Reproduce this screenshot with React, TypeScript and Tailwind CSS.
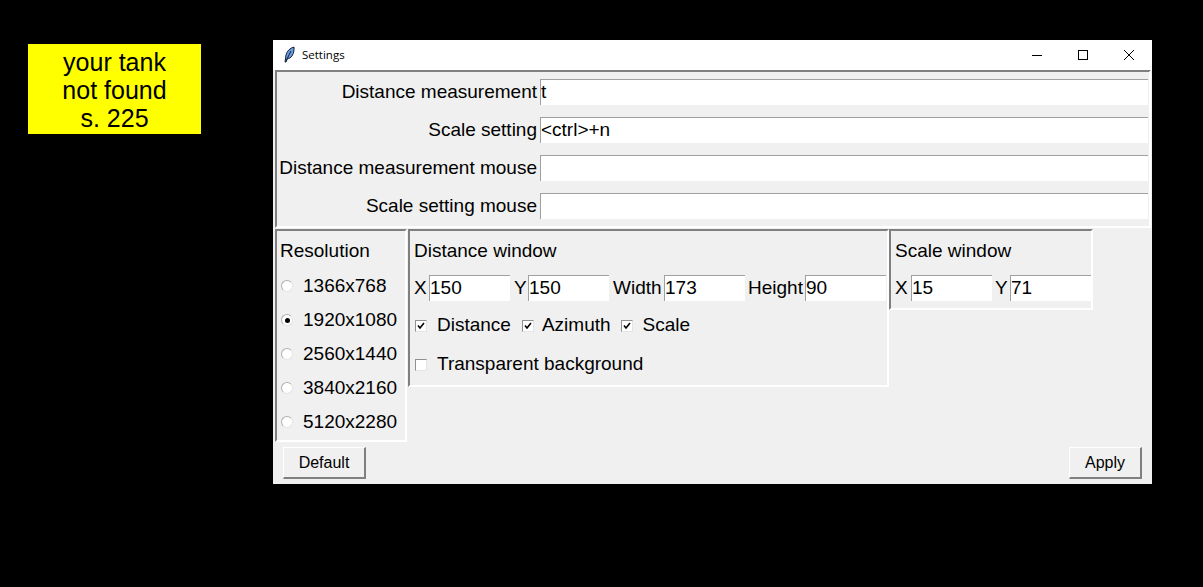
import type { ReactNode } from "react";

const frame = "border-2 border-t-[#808080] border-l-[#808080] border-b-white border-r-white";
const entry = "h-[26px] bg-white border-t border-l border-t-[#a0a0a0] border-l-[#a0a0a0] leading-[24px] overflow-hidden";

function Feather() {
  return (
    <svg width="16" height="18" viewBox="0 0 16 18">
      <path d="M3 16 L4 9 C5 5 8 2 12 1 C12.5 5 11 10 8 12 L5.5 12.5 L4 16 Z" fill="#6f9fe0" stroke="#10203c" strokeWidth="1" />
      <path d="M4 15 L9 5" stroke="#10203c" strokeWidth="1" fill="none" />
    </svg>
  );
}

function Row({ label, value }: { label: string; value?: string }) {
  return (
    <div className="flex items-center">
      <div className="w-[260px] text-right leading-[26px] whitespace-nowrap">{label}</div>
      <div className={`${entry} ml-[3px] w-[608px]`}>{value}</div>
    </div>
  );
}

function Field({ label, value, gap, width = "w-[81px]" }: { label: string; value: string; gap: string; width?: string }) {
  return (
    <div className="flex items-center">
      <span className={gap}>{label}</span>
      <div className={`${entry} ${width}`}>{value}</div>
    </div>
  );
}

function Radio({ label, checked }: { label: string; checked?: boolean }) {
  return (
    <div className="flex items-center h-[34px]">
      <div className="ml-px w-3 h-3 rounded-full bg-white border border-[#b0b0b0] border-b-[#e4e4e4] border-r-[#e4e4e4] flex items-center justify-center">
        {checked && <div className="w-[5px] h-[5px] rounded-full bg-black" />}
      </div>
      <span className="ml-[10px] whitespace-nowrap">{label}</span>
    </div>
  );
}

function Check({ label, checked, labelGap }: { label: string; checked?: boolean; labelGap: string }) {
  return (
    <div className="flex items-center">
      <div className="w-3 h-3 bg-white border border-t-[#909090] border-l-[#909090] border-b-[#e4e4e4] border-r-[#e4e4e4] flex items-center justify-center">
        {checked && (
          <svg width="8" height="8" viewBox="0 0 8 8">
            <path d="M1 3.5 L3 6 L7 1" stroke="#000" strokeWidth="1.6" fill="none" />
          </svg>
        )}
      </div>
      <span className={`${labelGap} whitespace-nowrap`}>{label}</span>
    </div>
  );
}

function TkButton({ children, width }: { children: ReactNode; width: string }) {
  return (
    <div className={`${width} h-8 bg-[#f0f0f0] border border-t-white border-l-white border-b-2 border-r-2 border-b-[#808080] border-r-[#808080] flex items-center justify-center text-[16px]`}>
      {children}
    </div>
  );
}

export default function App() {
  return (
    <div className="w-[1203px] h-[587px] bg-black flex items-start overflow-hidden text-black font-['Liberation_Sans',Arial,sans-serif]">
      <div className="ml-[28px] mt-[44px] w-[173px] h-[90px] bg-[#ffff00] text-center text-[25px] leading-[28px] pt-[4px]">
        <div>your tank</div>
        <div>not found</div>
        <div>s. 225</div>
      </div>

      <div className="ml-[72px] mt-[40px] w-[879px] h-[444px] bg-[#f0f0f0] text-[19px] flex flex-col">
        <div className="h-[30px] bg-white flex items-center pl-[9px] shrink-0">
          <Feather />
          <span className="ml-[4px] text-[11.5px] font-['Open_Sans',sans-serif]">Settings</span>
          <div className="ml-auto flex items-center">
            <svg width="46" height="16" viewBox="0 0 46 16">
              <path d="M18 8.5 H28" stroke="#000" strokeWidth="1" />
            </svg>
            <svg width="46" height="16" viewBox="0 0 46 16">
              <rect x="18.5" y="3.5" width="9" height="9" stroke="#000" fill="none" />
            </svg>
            <svg width="46" height="16" viewBox="0 0 46 16">
              <path d="M18 3 L28 13 M28 3 L18 13" stroke="#000" strokeWidth="1" />
            </svg>
          </div>
        </div>

        <div className={`${frame} ml-[2px] mr-px h-[158px] pt-[7px] flex flex-col gap-3 shrink-0`}>
          <Row label="Distance measurement" value="t" />
          <Row label="Scale setting" value="<ctrl>+n" />
          <Row label="Distance measurement mouse" />
          <Row label="Scale setting mouse" />
        </div>

        <div className="flex items-start mt-px ml-[2px]">
          <div className={`${frame} w-[132px] h-[213px] pl-[3px] pt-[7px]`}>
            <div className="leading-[26px] mb-[5px]">Resolution</div>
            <Radio label="1366x768" />
            <Radio label="1920x1080" checked />
            <Radio label="2560x1440" />
            <Radio label="3840x2160" />
            <Radio label="5120x2280" />
          </div>

          <div className={`${frame} ml-px w-[481px] h-[158px] pl-[4px] pt-[7px]`}>
            <div className="leading-[26px]">Distance window</div>
            <div className="flex items-center mt-[10px]">
              <Field label="X" value="150" gap="w-[15px]" />
              <Field label="Y" value="150" gap="ml-[4px] w-[14px]" />
              <Field label="Width" value="173" gap="ml-[4px] w-[51px]" />
              <Field label="Height" value="90" gap="ml-[3px] w-[57px]" />
            </div>
            <div className="flex items-center mt-[10px] h-[26px] pl-px">
              <Check label="Distance" checked labelGap="ml-[10px] mr-[11px]" />
              <Check label="Azimuth" checked labelGap="ml-[8px] mr-[10px]" />
              <Check label="Scale" checked labelGap="ml-[10px]" />
            </div>
            <div className="flex items-center mt-[13px] h-[26px] pl-px">
              <Check label="Transparent background" labelGap="ml-[10px]" />
            </div>
          </div>

          <div className={`${frame} w-[204px] h-[81px] pl-[4px] pt-[7px]`}>
            <div className="leading-[26px]">Scale window</div>
            <div className="flex items-center mt-[10px]">
              <Field label="X" value="15" gap="w-[16px]" />
              <Field label="Y" value="71" gap="ml-[3px] w-[15px]" />
            </div>
          </div>
        </div>

        <div className="flex justify-between pl-[10px] pr-[10px] mt-[5px]">
          <TkButton width="w-[83px]">Default</TkButton>
          <TkButton width="w-[73px]">Apply</TkButton>
        </div>
      </div>
    </div>
  );
}
